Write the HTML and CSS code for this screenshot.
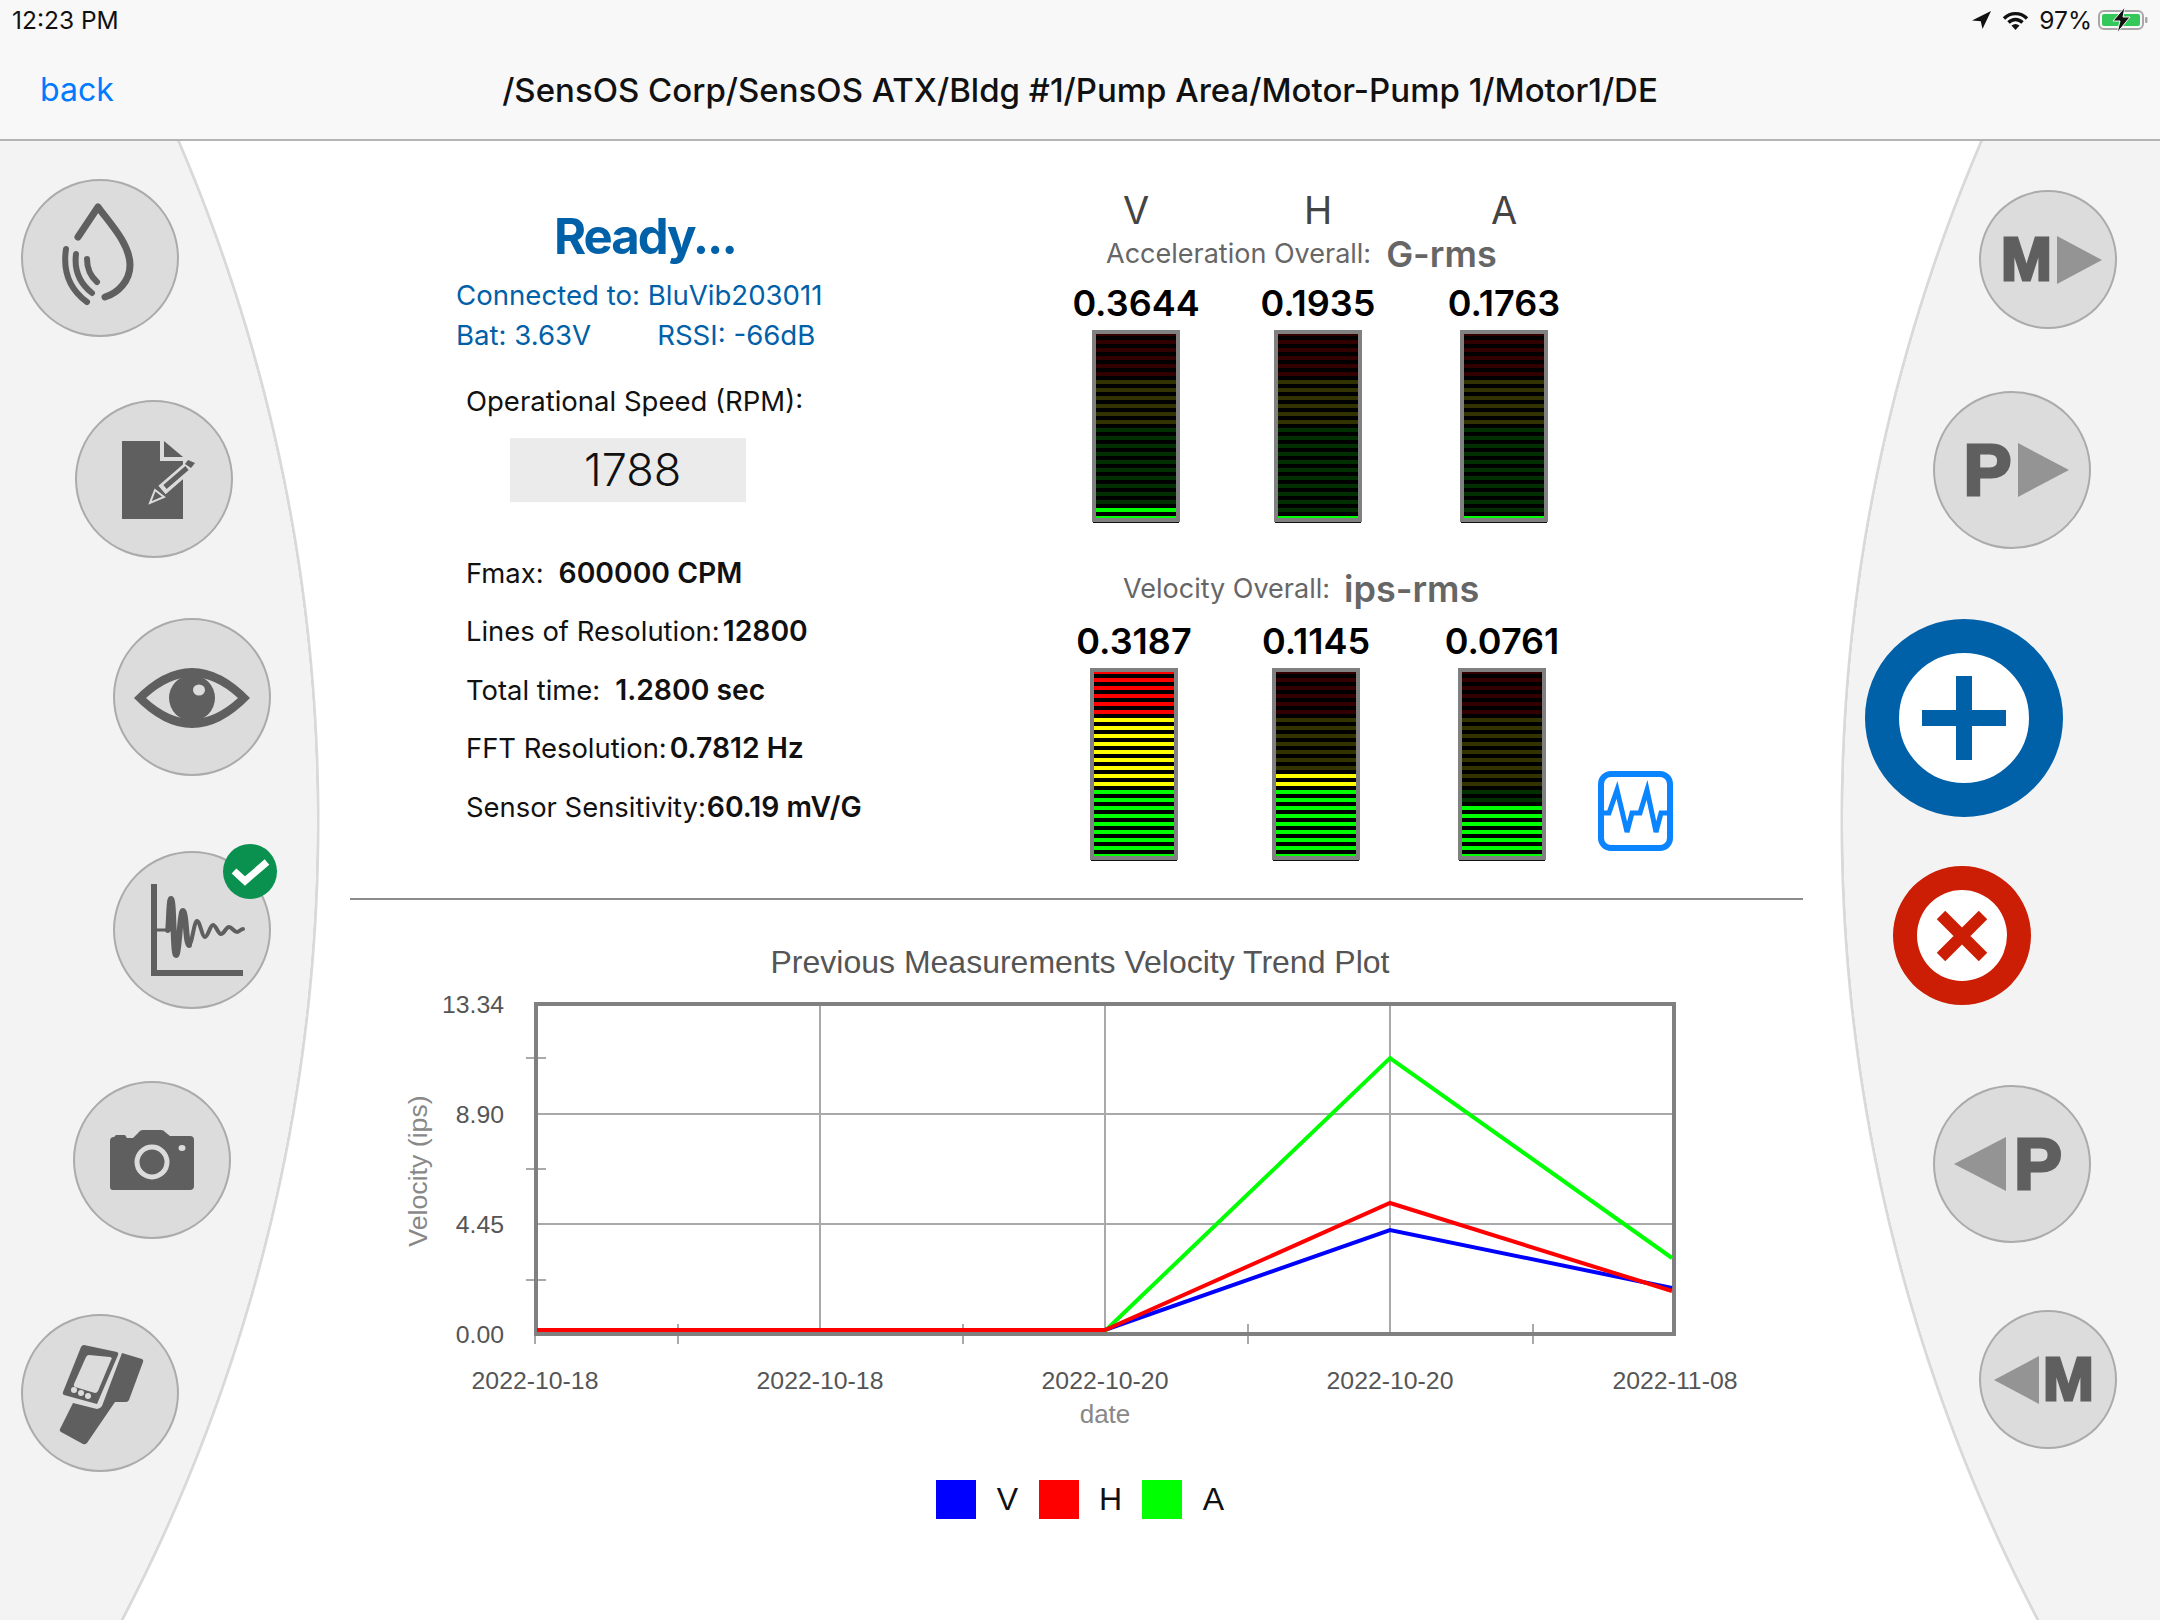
FILE: index.html
```html
<!DOCTYPE html>
<html lang="en">
<head>
    <meta charset="UTF-8">
    <meta name="viewport" content="width=device-width, initial-scale=1.0">
    <title>Measurement</title>
    <link rel="stylesheet" href="styles.css">
</head>
<body>
    <header class="top">
        <div class="status-bar">
            <span class="status-time">12:23 PM</span>
            <div class="status-icons">
                <svg class="ico-arrow" width="19" height="18" viewBox="0 0 19 18"><path d="M0 9.5 19 0 10.5 18 8.8 10.2Z"/></svg>
                <svg class="ico-wifi" width="27" height="19" viewBox="0 0 27 19">
                    <path d="M2 7.5C8.5 1 18.5 1 25 7.5M6.5 11.5C10.5 7.5 16.5 7.5 20.5 11.5"/>
                    <path class="wifi-dot" d="M9.5 14.5C12 12.5 15 12.5 17.5 14.5L13.5 19Z"/>
                </svg>
                <span class="status-pct">97%</span>
                <svg class="ico-battery" width="50" height="26" viewBox="0 -3 50 26">
                    <rect x="1" y="1" width="44" height="18" rx="5" class="bat-shell"/>
                    <rect x="4" y="4" width="38" height="12" rx="2" class="bat-fill"/>
                    <rect x="47" y="7" width="2.5" height="6" rx="1" class="bat-nub"/>
                    <path d="M27 -3 15 11H22L19 23 32 7H25Z" class="bat-bolt"/>
                </svg>
            </div>
        </div>
        <nav class="nav-bar">
            <a class="back-link">back</a>
            <h1 class="nav-title">/SensOS Corp/SensOS ATX/Bldg #1/Pump Area/Motor-Pump 1/Motor1/DE</h1>
        </nav>
    </header>

    <main class="layout">
        <aside class="rail rail-left">
            <button class="round-btn btn-drop">
                <svg class="ico-line" width="158" height="158" viewBox="0 0 158 158">
                    <path class="thick" d="M57 58 77 28C86 41 109 64 109 86 109 102 97 114 84 118"/>
                    <path d="M45 70Q40 104 66 123M55 75Q52 99 71 114M66 80Q66 94 76 103"/>
                </svg>
            </button>
            <button class="round-btn btn-notes">
                <svg class="ico-fill" width="158" height="158" viewBox="0 0 158 158">
                    <path d="M47 41H85V61H108V119H47Z"/>
                    <path d="M89 41 108 57H89Z"/>
                    <path class="pen-edge" d="M117 64 87 90"/>
                    <path class="pen-core" d="M112 68 90 87"/>
                    <path class="pen-cap" d="M113 60 120 63 116 68 110 64Z"/>
                    <path class="pen-tip" d="M80 90 89 97 75 103Z"/>
                </svg>
            </button>
            <button class="round-btn btn-eye">
                <svg class="ico-fill" width="158" height="158" viewBox="0 0 158 158">
                    <path d="M21 80Q79 20 137 80 79 140 21 80Z"/>
                    <path class="cut" d="M33 80Q79 38 125 80 79 122 33 80Z"/>
                    <circle cx="79" cy="80" r="23"/>
                    <ellipse class="cut" cx="86" cy="72" rx="6" ry="5.5"/>
                </svg>
            </button>
            <button class="round-btn btn-wave">
                <svg class="ico-line" width="158" height="158" viewBox="0 0 158 158">
                    <path class="square" d="M41 33V122H130"/>
                    <path class="hair" d="M44 79H56"/>
                    <path d="M55 79C56 79 56 48 58 48 61 48 60 104 63 104 66 104 67 60 70 60 73 60 73 94 76 94"/>
                    <path class="tail" d="M76 94C79 94 81 70 84 70 87 70 89 86 92 86 95 86 97 74 100 74 103 74 105 83 108 83 111 83 113 76 116 76 119 76 121 81 124 81 126 81 128 78 130 78"/>
                </svg>
                <span class="check-badge">
                    <svg width="54" height="55" viewBox="0 0 54 55"><path d="M11 27 22 37 44 18"/></svg>
                </span>
            </button>
            <button class="round-btn btn-camera">
                <svg class="ico-fill" width="158" height="158" viewBox="0 0 158 158">
                    <path d="M37 60Q37 56 41 56L43 54H52L54 57H60L66 51Q67 49 70 49H88Q91 49 92 51L97 55H117Q121 55 121 59V105Q121 109 117 109H40Q37 109 37 106Z"/>
                    <circle class="lens" cx="79" cy="81" r="15"/>
                    <ellipse class="cut" cx="109" cy="67" rx="3.5" ry="3"/>
                </svg>
            </button>
            <button class="round-btn btn-device">
                <svg class="ico-fill" width="158" height="158" viewBox="0 0 158 158">
                    <path d="M63 31 96 38Q98 39 97 41L76 90 43 81Q41 80 42 78L60 33Q61 31 63 31Z"/>
                    <path class="cut" d="M68 41 89 43Q92 44 90 46L77 77Q76 79 74 79L54 73Q52 72 53 70L65 43Q66 41 68 41Z"/>
                    <circle class="cut" cx="53" cy="76" r="3"/>
                    <circle class="cut" cx="60" cy="79" r="3"/>
                    <circle class="cut" cx="67" cy="82" r="3"/>
                    <path d="M101 39 121 45Q123 46 122 48L108 86Q107 88 105 88H94L66 129Q64 131 62 130L40 118Q38 117 39 115L52 89 76 95Q79 95 81 92Z"/>
                </svg>
            </button>
        </aside>

        <section class="center">
            <div class="readings">
                <div class="info">
                    <div class="ready">Ready...</div>
                    <div class="conn">Connected to: BluVib203011</div>
                    <div class="conn conn-stats"><span>Bat: 3.63V</span><span>RSSI: -66dB</span></div>
                    <div class="speed-label">Operational Speed (RPM):</div>
                    <div class="speed-box">1788</div>
                    <div class="spec-list">
                        <div class="spec spec-wide"><span>Fmax:</span><b>600000 CPM</b></div>
                        <div class="spec"><span>Lines of Resolution:</span><b>12800</b></div>
                        <div class="spec spec-wide"><span>Total time:</span><b>1.2800 sec</b></div>
                        <div class="spec"><span>FFT Resolution:</span><b>0.7812 Hz</b></div>
                        <div class="spec spec-tight"><span>Sensor Sensitivity:</span><b>60.19 mV/G</b></div>
                    </div>
                </div>

                <div class="gauges">
                    <div class="axis-row">
                        <span>V</span><span>H</span><span>A</span>
                    </div>
                    <div class="gauge-title accel-title"><span>Acceleration Overall:</span><b>G-rms</b></div>
                    <div class="gauge-grid accel-grid">
                        <div class="gauge">
                            <div class="gauge-value">0.3644</div>
                            <div class="meter"><div class="meter-lit" style="height:10px"></div></div>
                        </div>
                        <div class="gauge">
                            <div class="gauge-value">0.1935</div>
                            <div class="meter"><div class="meter-lit" style="height:2px"></div></div>
                        </div>
                        <div class="gauge">
                            <div class="gauge-value">0.1763</div>
                            <div class="meter"><div class="meter-lit" style="height:2px"></div></div>
                        </div>
                    </div>

                    <div class="gauge-title vel-title"><span>Velocity Overall:</span><b>ips-rms</b></div>
                    <div class="vel-row">
                        <div class="gauge-grid vel-grid">
                            <div class="gauge">
                                <div class="gauge-value">0.3187</div>
                                <div class="meter"><div class="meter-lit" style="height:184px"></div></div>
                            </div>
                            <div class="gauge">
                                <div class="gauge-value">0.1145</div>
                                <div class="meter"><div class="meter-lit" style="height:84px"></div></div>
                            </div>
                            <div class="gauge">
                                <div class="gauge-value">0.0761</div>
                                <div class="meter"><div class="meter-lit" style="height:52px"></div></div>
                            </div>
                        </div>
                        <svg class="ico-pulse" width="75" height="80" viewBox="0 0 75 80">
                            <rect x="3" y="3" width="69" height="74" rx="10"/>
                            <path d="M5 42H11L19 19 29 61 34 42H42L49 19 58 61 63 42H70"/>
                        </svg>
                    </div>
                </div>
            </div>

            <hr class="divider">

            <svg class="trend" width="1520" height="560" viewBox="320 900 1520 560">
                <text class="plot-title" x="1080" y="973">Previous Measurements Velocity Trend Plot</text>

                <g class="grid-lines">
                    <path d="M820 1004V1334M1105 1004V1334M1390 1004V1334M535 1114H1674M535 1224H1674"/>
                    <path d="M526 1058H546M526 1169H546M526 1280H546"/>
                    <path d="M535 1324V1344M678 1324V1344M963 1324V1344M1248 1324V1344M1533 1324V1344"/>
                </g>
                <rect class="plot-frame" x="536" y="1004" width="1138" height="330"/>

                <polyline class="line-v" points="537,1330 1105,1330 1390,1230 1672,1288"/>
                <polyline class="line-a" points="1105,1331 1390,1058 1672,1258"/>
                <polyline class="line-h" points="537,1330 1105,1330 1390,1203 1672,1291"/>

                <g class="tick-y">
                    <text x="504" y="1013">13.34</text>
                    <text x="504" y="1123">8.90</text>
                    <text x="504" y="1233">4.45</text>
                    <text x="504" y="1343">0.00</text>
                </g>
                <g class="tick-x">
                    <text x="535" y="1389">2022-10-18</text>
                    <text x="820" y="1389">2022-10-18</text>
                    <text x="1105" y="1389">2022-10-20</text>
                    <text x="1390" y="1389">2022-10-20</text>
                    <text x="1675" y="1389">2022-11-08</text>
                </g>
                <text class="axis-name" x="1105" y="1423">date</text>
                <text class="axis-name axis-name-y" transform="translate(427 1171) rotate(-90)">Velocity (ips)</text>
            </svg>

            <div class="legend">
                <span class="swatch swatch-v"></span><span class="legend-name">V</span>
                <span class="swatch swatch-h"></span><span class="legend-name">H</span>
                <span class="swatch swatch-a"></span><span class="legend-name">A</span>
            </div>
        </section>

        <aside class="rail rail-right">
            <button class="round-btn small-btn btn-next-m"><span class="jump-letter">M</span><i class="tri tri-right"></i></button>
            <button class="round-btn btn-next-p"><span class="jump-letter big">P</span><i class="tri tri-right big"></i></button>
            <button class="ring-btn btn-add">
                <svg width="84" height="84" viewBox="0 0 84 84"><path d="M42 0V84M0 42H84"/></svg>
            </button>
            <button class="ring-btn btn-cancel">
                <svg width="50" height="50" viewBox="0 0 50 50"><path d="M4 4 46 46M46 4 4 46"/></svg>
            </button>
            <button class="round-btn btn-prev-p"><i class="tri tri-left big"></i><span class="jump-letter big">P</span></button>
            <button class="round-btn small-btn btn-prev-m"><i class="tri tri-left"></i><span class="jump-letter">M</span></button>
        </aside>
    </main>
</body>
</html>
```

FILE: styles.css
```css
/* page */
body {
    margin: 0;
    width: 2160px;
    height: 1620px;
    overflow: hidden;
    background-color: #fff;
    font-family: "Inter", "Liberation Sans", sans-serif;
    color: #111;
}

/* header */
.top {
    box-sizing: border-box;
    height: 141px;
    background-color: #f8f8f8;
    border-bottom: 2px solid #b4b4b4;
}

.status-bar {
    display: flex;
    justify-content: space-between;
    align-items: center;
    height: 40px;
    padding: 0 12px;
    font-size: 24.5px;
}

.status-icons {
    display: flex;
    align-items: center;
}

.ico-arrow {
    margin-right: 11px;
    fill: #111;
}

.ico-wifi {
    margin-right: 10px;
    fill: none;
    stroke: #111;
    stroke-width: 3.4;
}

.ico-wifi .wifi-dot {
    fill: #111;
    stroke: none;
}

.status-pct {
    margin-right: 6px;
}

.bat-shell {
    fill: none;
    stroke: #a8a8a8;
    stroke-width: 2;
}

.bat-fill {
    fill: #34c759;
}

.bat-nub {
    fill: #a8a8a8;
}

.bat-bolt {
    fill: #111;
    stroke: #f8f8f8;
    stroke-width: 1;
}

.nav-bar {
    display: grid;
    grid-template-columns: 1fr auto 1fr;
    align-items: center;
    height: 99px;
}

.back-link {
    margin-left: 40px;
    font-size: 32px;
    color: #007aff;
}

.nav-title {
    margin: 0;
    font-size: 33px;
    font-weight: 500;
    color: #111;
    white-space: nowrap;
}

/* three columns under the header */
.layout {
    display: grid;
    grid-template-columns: 320px 1520px 320px;
    height: 1479px;
}

.rail {
    display: flex;
    flex-direction: column;
    align-items: flex-start;
}

.rail-left {
    background: radial-gradient(circle at -1408px 680px, #f3f3f3 1724.5px, #d9d9d9 1725px, #d9d9d9 1727px, transparent 1728px);
}

.rail-right {
    background: radial-gradient(circle at 1728px 680px, #f3f3f3 1724.5px, #d9d9d9 1725px, #d9d9d9 1727px, transparent 1728px);
}

/* rail buttons */
.round-btn {
    position: relative;
    display: flex;
    justify-content: center;
    align-items: center;
    flex: none;
    box-sizing: border-box;
    width: 158px;
    height: 158px;
    padding: 0;
    background-color: #dcdcdc;
    border: 2px solid #ababab;
    border-radius: 50%;
}

.round-btn > svg {
    margin: -2px;
}

.small-btn {
    width: 138px;
    height: 139px;
}

.btn-drop { margin: 38px 0 0 21px; }
.btn-notes { margin: 63px 0 0 75px; }
.btn-eye { margin: 60px 0 0 113px; }
.btn-wave { margin: 75px 0 0 113px; }
.btn-camera { margin: 72px 0 0 73px; }
.btn-device { margin: 75px 0 0 21px; }

.btn-next-m { margin: 49px 0 0 139px; padding-left: 7px; }
.btn-next-p { margin: 62px 0 0 93px; padding-left: 8px; }
.btn-add { margin: 70px 0 0 25px; }
.btn-cancel { margin: 49px 0 0 53px; }
.btn-prev-p { margin: 80px 0 0 93px; padding-right: 8px; }
.btn-prev-m { margin: 67px 0 0 139px; padding-right: 8px; }

.ico-line {
    fill: none;
    stroke: #5f5f5f;
    stroke-width: 6;
    stroke-linecap: round;
    stroke-linejoin: round;
}

.ico-line .thick {
    stroke-width: 7;
}

.ico-line .square {
    stroke-linecap: butt;
    stroke-linejoin: miter;
}

.ico-line .hair {
    stroke-width: 3;
}

.ico-line .tail {
    stroke-width: 4;
}

.ico-fill {
    fill: #5f5f5f;
}

.ico-fill .cut {
    fill: #dcdcdc;
}

.ico-fill .lens {
    stroke: #dcdcdc;
    stroke-width: 5;
}

.pen-edge {
    fill: none;
    stroke: #dcdcdc;
    stroke-width: 11;
}

.pen-core {
    fill: none;
    stroke: #5f5f5f;
    stroke-width: 5;
}

.pen-cap {
    fill: #5f5f5f;
}

.ico-fill .pen-tip {
    fill: #5f5f5f;
    stroke: #dcdcdc;
    stroke-width: 2;
}

.check-badge {
    position: absolute;
    left: 108px;
    top: -9px;
    width: 54px;
    height: 55px;
    border-radius: 50%;
    background-color: #0a9150;
}

.check-badge svg {
    display: block;
    fill: none;
    stroke: #fff;
    stroke-width: 7;
}

/* next and previous buttons */
.jump-letter {
    font-family: "Liberation Sans", sans-serif;
    font-size: 61px;
    line-height: 1;
    font-weight: 700;
    color: #5f5f5f;
    -webkit-text-stroke: 3px #5f5f5f;
}

.jump-letter.big {
    font-size: 72px;
}

.tri {
    width: 0;
    height: 0;
    border-top: 24px solid transparent;
    border-bottom: 24px solid transparent;
}

.tri.big {
    border-top-width: 27px;
    border-bottom-width: 27px;
}

.tri-right {
    margin-left: 5px;
    border-left: 45px solid #949494;
}

.tri-right.big {
    margin-left: 6px;
    border-left-width: 51px;
}

.tri-left {
    margin-right: 4px;
    border-right: 45px solid #949494;
}

.tri-left.big {
    margin-right: 8px;
    border-right-width: 52px;
}

.ring-btn {
    display: flex;
    justify-content: center;
    align-items: center;
    flex: none;
    box-sizing: border-box;
    padding: 0;
    background-color: #fff;
    border-radius: 50%;
}

.ring-btn svg {
    fill: none;
}

.btn-add {
    width: 198px;
    height: 198px;
    border: 34px solid #0060a8;
}

.btn-add svg {
    stroke: #0060a8;
    stroke-width: 16;
}

.btn-cancel {
    width: 138px;
    height: 139px;
    border: 24px solid #cb1e05;
}

.btn-cancel svg {
    stroke: #cb1e05;
    stroke-width: 12;
}

/* measurement block */
.readings {
    display: flex;
    height: 757px;
}

.info {
    box-sizing: border-box;
    width: 740px;
    padding: 68px 0 0 136px;
    font-size: 28px;
}

.ready {
    margin-left: 98px;
    font-size: 49px;
    letter-spacing: -2px;
    line-height: 56px;
    font-weight: 700;
    color: #0060a8;
}

.conn {
    line-height: 40px;
    font-size: 27.6px;
    color: #0060a8;
}

.ready + .conn {
    margin-top: 10px;
}

.conn-stats {
    display: flex;
    gap: 66px;
}

.speed-label {
    margin: 26px 0 0 10px;
    line-height: 40px;
    font-size: 27.5px;
}

.speed-box {
    box-sizing: border-box;
    width: 236px;
    height: 64px;
    margin: 17px 0 0 54px;
    line-height: 64px;
    padding-left: 74px;
    background-color: #ebebeb;
    font-size: 45px;
    font-weight: 300;
}

.spec-list {
    display: flex;
    flex-direction: column;
    gap: 18.4px;
    margin: 51px 0 0 10px;
}

.spec {
    display: flex;
    align-items: baseline;
    gap: 3px;
    height: 40px;
    line-height: 40px;
    font-size: 27.4px;
}

.spec b {
    font-size: 28.3px;
    font-weight: 600;
}

.spec-wide {
    gap: 15px;
}

.spec-tight {
    gap: 1px;
}

/* meters */
.gauges {
    padding: 47px 0 0 6px;
}

.axis-row {
    display: grid;
    grid-template-columns: 182px 186px 140px;
    margin-bottom: 2px;
    line-height: 44px;
    font-size: 38px;
    color: #444;
}

.axis-row span {
    width: 140px;
    text-align: center;
}

.gauge-title {
    display: flex;
    align-items: center;
    height: 40px;
    line-height: 40px;
    font-size: 27px;
    color: #666;
}

.gauge-title b {
    font-size: 36px;
    font-weight: 600;
}

.accel-title {
    gap: 15px;
    margin-left: 40px;
}

.vel-title {
    gap: 14px;
    margin: 47px 0 0 57px;
}

.gauge-grid {
    display: grid;
    grid-template-columns: 182px 186px 140px;
}

.accel-grid {
    margin-top: 7px;
    --yellow-end: 92px;
}

.vel-row {
    display: flex;
    margin-top: 10px;
    margin-left: -2px;
}

.vel-grid {
    --yellow-end: 116px;
}

.ico-pulse {
    align-self: flex-end;
    margin: 0 0 9px 26px;
    fill: none;
    stroke: #0a84ff;
    stroke-width: 6;
}

.ico-pulse path {
    stroke-width: 5;
}

.gauge {
    width: 140px;
}

.gauge-value {
    line-height: 44px;
    font-size: 36px;
    font-weight: 600;
    text-align: center;
    color: #000;
}

.meter {
    --bands: repeating-linear-gradient(to bottom, transparent 0 2px, #000 2px 6px, transparent 6px 8px);
    display: flex;
    flex-direction: column;
    justify-content: flex-end;
    box-sizing: border-box;
    width: 88px;
    height: 192px;
    margin: 5px 0 0 26px;
    border: 4px solid #808080;
    box-shadow: 0 2px 0 -1px #111;
    background:
        var(--bands) bottom / 100% 184px no-repeat,
        linear-gradient(to bottom, #320000 0 44px, #333300 44px var(--yellow-end), #003000 var(--yellow-end)) bottom / 100% 184px no-repeat;
}

.meter-lit {
    background:
        var(--bands) bottom / 100% 184px no-repeat,
        linear-gradient(to bottom, #ff0000 0 44px, #ffff00 44px var(--yellow-end), #00ff00 var(--yellow-end)) bottom / 100% 184px no-repeat;
}

.divider {
    height: 2px;
    margin: 0 37px 0 30px;
    border: none;
    background-color: #8c8c8c;
}

/* trend plot */
.trend {
    display: block;
    font-family: "Liberation Sans", sans-serif;
}

.plot-title {
    font-size: 32px;
    text-anchor: middle;
    fill: #555;
}

.grid-lines {
    fill: none;
    stroke: #a9a9a9;
    stroke-width: 2;
}

.plot-frame {
    fill: none;
    stroke: #808080;
    stroke-width: 4;
}

.line-v,
.line-h,
.line-a {
    fill: none;
    stroke-width: 4;
}

.line-v { stroke: #0000ff; }
.line-h { stroke: #ff0000; }
.line-a { stroke: #00ff00; }

.tick-y text {
    font-size: 24.8px;
    text-anchor: end;
    fill: #555;
}

.tick-x text {
    font-size: 24.8px;
    text-anchor: middle;
    fill: #555;
}

.axis-name {
    font-size: 26px;
    text-anchor: middle;
    fill: #888;
}

.axis-name-y {
    font-size: 26.7px;
}

.legend {
    display: flex;
    align-items: center;
    margin-top: 20px;
    padding-left: 616px;
    font-family: "Liberation Sans", sans-serif;
    font-size: 32px;
    color: #111;
}

.swatch {
    width: 40px;
    height: 39px;
}

.swatch-v { background-color: #0000ff; }
.swatch-h { background-color: #ff0000; }
.swatch-a { background-color: #00ff00; }

.legend-name {
    width: 63px;
    text-align: center;
}
```
